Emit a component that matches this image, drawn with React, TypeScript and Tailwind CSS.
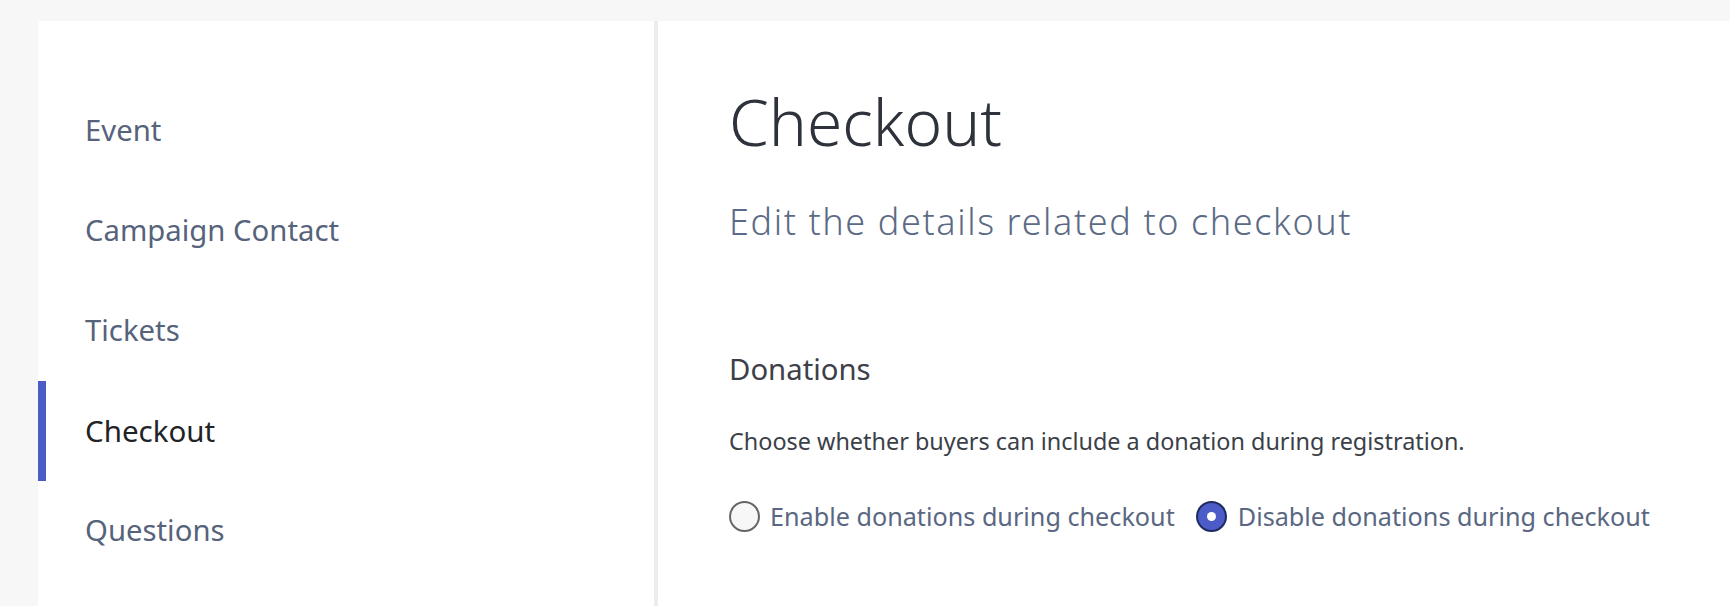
import React from "react";

const navItems = ["Event", "Campaign Contact", "Tickets", "Checkout", "Questions"];

export default function App() {
  return (
    <div
      className="w-[1730px] h-[606px] overflow-hidden bg-[#f7f7f7] pt-[21px] pl-[38px] flex"
      style={{ fontFamily: '"Noto Sans", "Open Sans", sans-serif' }}
    >
      <aside className="w-[620px] shrink-0 bg-white border-r-4 border-[#ededed] pt-[60px] flex flex-col">
        {navItems.map((item) =>
          item === "Checkout" ? (
            <div key={item} className="h-[100px] flex items-center border-l-8 border-[#4b5bc8] pl-[39px]">
              <span className="text-[29.5px] text-[#222326] leading-none">{item}</span>
            </div>
          ) : (
            <div key={item} className="h-[100px] flex items-center pl-[47px]">
              <span className="text-[29.3px] text-[#56637b] leading-none">{item}</span>
            </div>
          )
        )}
      </aside>
      <main className="flex-1 bg-white pl-[71px] pt-[69px] flex flex-col items-start">
        <h1 className="text-[64px] leading-none font-light text-[#2e323a]">Checkout</h1>
        <p className="mt-[50px] text-[36px] leading-none font-light tracking-[1.6px] text-[#5c6b85] whitespace-nowrap">
          Edit the details related to checkout
        </p>
        <h2 className="mt-[115px] text-[29.3px] leading-none text-[#3d4049]">Donations</h2>
        <p className="mt-[46px] text-[23.4px] leading-none text-[#3b3f48] whitespace-nowrap">
          Choose whether buyers can include a donation during registration.
        </p>
        <div className="mt-[47px] flex items-center h-[32px] whitespace-nowrap">
          <label className="flex items-center gap-[10px]">
            <span className="w-[31px] h-[31px] shrink-0 rounded-full border-2 border-[#666] bg-[#f7f7f7]" />
            <span className="text-[25.2px] leading-none text-[#5a6782]">Enable donations during checkout</span>
          </label>
          <label className="flex items-center gap-[11px] ml-[21px]">
            <span className="w-[31px] h-[31px] shrink-0 rounded-full border-2 border-[#1f2a5e] bg-[#4b5bc8] flex items-center justify-center">
              <span className="w-[9px] h-[9px] rounded-full bg-white" />
            </span>
            <span className="text-[25.2px] leading-none text-[#5a6782]">Disable donations during checkout</span>
          </label>
        </div>
      </main>
    </div>
  );
}
